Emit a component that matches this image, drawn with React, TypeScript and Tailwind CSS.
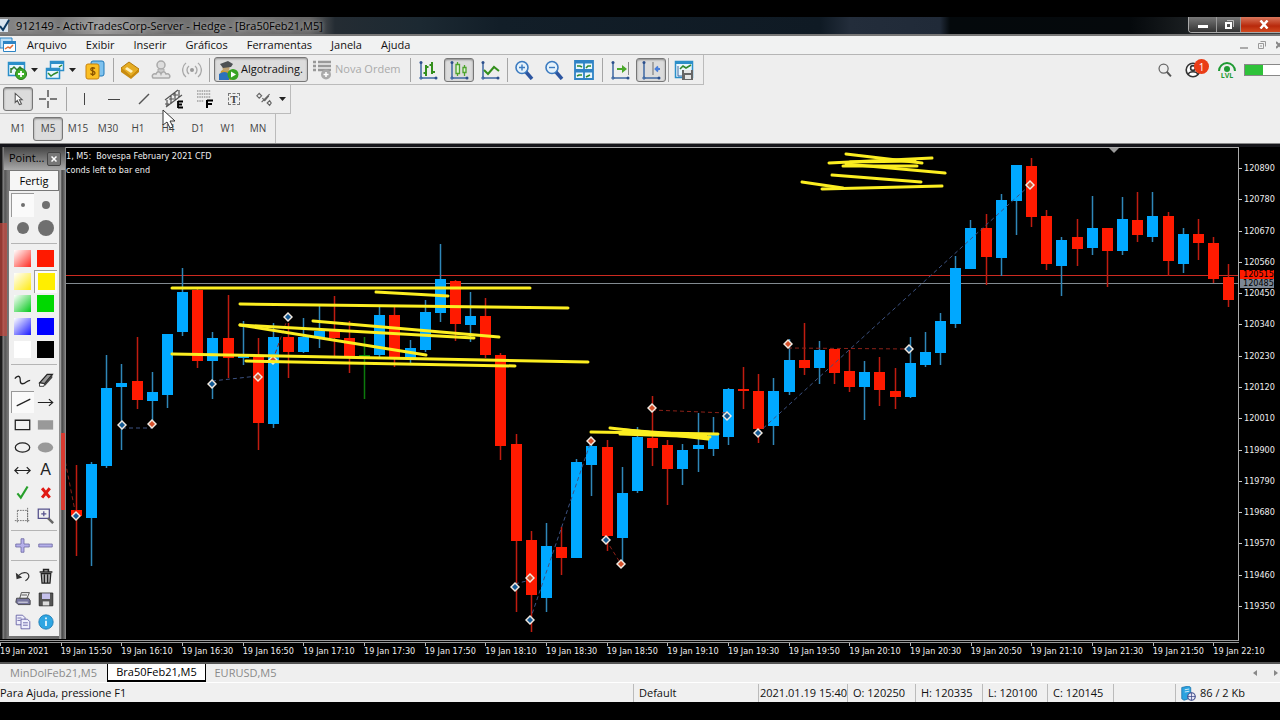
import { ReactNode } from 'react';
import clsx from 'clsx';

type Candle = [kind: 'u' | 'd' | 'n', high: number, top: number, bottom: number, low: number];
type Line = [x1: number, y1: number, x2: number, y2: number];

const FIRST_X = 76;
const STEP = 15.16;

const COLORS = { u: '#00a8ff', d: '#ff1a00', n: '#0c8a0c' };
const WICKS = { u: '#2f87b8', d: '#c01c10', n: '#0c7a0c' };

const CANDLES: Candle[] = [
	['d', 465, 510, 516, 556],
	['u', 462, 464, 518, 566],
	['u', 355, 388, 466, 468],
	['u', 364, 383, 387, 450],
	['d', 337, 381, 400, 409],
	['u', 372, 392, 401, 423],
	['u', 334, 334, 395, 408],
	['u', 268, 292, 332, 336],
	['d', 289, 290, 361, 368],
	['u', 332, 338, 361, 399],
	['d', 295, 338, 358, 378],
	['u', 321, 355, 358, 365],
	['d', 338, 357, 423, 450],
	['u', 323, 337, 424, 428],
	['d', 323, 337, 352, 378],
	['u', 318, 337, 352, 353],
	['u', 306, 331, 338, 348],
	['d', 296, 331, 338, 357],
	['d', 321, 338, 357, 373],
	['n', 337, 355, 357, 399],
	['u', 307, 315, 355, 357],
	['d', 307, 315, 357, 367],
	['u', 340, 348, 358, 363],
	['u', 300, 312, 350, 352],
	['u', 244, 279, 313, 322],
	['d', 280, 281, 324, 341],
	['u', 292, 316, 325, 342],
	['d', 298, 316, 355, 358],
	['d', 353, 355, 446, 460],
	['d', 434, 444, 541, 612],
	['d', 531, 540, 595, 632],
	['u', 523, 546, 598, 612],
	['d', 527, 547, 558, 575],
	['u', 459, 462, 558, 558],
	['u', 437, 446, 465, 496],
	['d', 440, 447, 536, 551],
	['u', 467, 493, 538, 567],
	['u', 427, 437, 491, 493],
	['d', 396, 438, 448, 466],
	['d', 440, 445, 469, 505],
	['u', 444, 450, 469, 485],
	['u', 413, 445, 449, 472],
	['u', 417, 435, 449, 456],
	['u', 388, 389, 437, 445],
	['d', 367, 389, 391, 409],
	['d', 374, 391, 429, 443],
	['u', 378, 391, 426, 445],
	['u', 339, 360, 392, 395],
	['d', 323, 360, 368, 375],
	['u', 341, 350, 368, 384],
	['d', 349, 349, 373, 384],
	['d', 350, 371, 387, 392],
	['u', 361, 372, 387, 420],
	['d', 357, 372, 390, 406],
	['d', 368, 391, 397, 409],
	['u', 337, 363, 397, 398],
	['u', 332, 352, 365, 367],
	['u', 313, 321, 353, 365],
	['u', 256, 268, 324, 328],
	['u', 220, 228, 269, 269],
	['d', 214, 228, 257, 285],
	['u', 194, 200, 258, 276],
	['u', 165, 165, 201, 235],
	['d', 158, 166, 217, 227],
	['d', 210, 216, 264, 270],
	['u', 237, 240, 266, 296],
	['d', 219, 237, 249, 266],
	['u', 196, 228, 248, 255],
	['d', 228, 228, 251, 287],
	['u', 197, 219, 251, 255],
	['d', 192, 220, 235, 242],
	['u', 192, 216, 237, 242],
	['d', 212, 216, 261, 276],
	['u', 228, 234, 264, 273],
	['d', 219, 234, 243, 260],
	['d', 237, 243, 279, 283],
	['d', 264, 277, 300, 307],
];

const BUYS = [[76, 516], [122, 425], [212, 384], [288, 317], [515, 587], [530, 620], [606, 540], [727, 416], [758, 433], [909, 349]];
const SELLS = [[152, 424], [258, 377], [273, 360], [530, 578], [591, 441], [621, 564], [652, 408], [788, 344], [1030, 185]];

const BLUE_TRADES: Line[] = [
	[122, 428, 152, 428],
	[212, 381, 258, 376],
	[515, 584, 530, 580],
	[530, 620, 591, 441],
	[758, 433, 1030, 185],
];
const RED_TRADES: Line[] = [
	[64, 455, 76, 516],
	[273, 360, 288, 317],
	[606, 540, 621, 564],
	[652, 410, 727, 413],
	[788, 348, 909, 349],
];

const STROKES: Line[] = [
	[172, 288, 530, 288],
	[376, 292, 448, 296],
	[240, 304, 568, 308],
	[240, 325, 474, 338],
	[240, 325, 426, 355],
	[313, 321, 499, 337],
	[172, 354, 588, 362],
	[246, 361, 515, 366],
	[591, 432, 718, 434],
	[610, 428, 708, 439],
	[620, 434, 710, 437],
	[624, 430, 706, 436],
	[846, 154, 922, 163],
	[829, 163, 932, 158],
	[843, 166, 917, 166],
	[846, 164, 945, 173],
	[850, 162, 915, 161],
	[832, 175, 921, 182],
	[802, 182, 843, 188],
	[822, 189, 942, 186],
];

const PRICES = [120890, 120780, 120670, 120560, 120450, 120340, 120230, 120120, 120010, 119900, 119790, 119680, 119570, 119460, 119350];
const TIMES = ['2021', '15:50', '16:10', '16:30', '16:50', '17:10', '17:30', '17:50', '18:10', '18:30', '18:50', '19:10', '19:30', '19:50', '20:10', '20:30', '20:50', '21:10', '21:30', '21:50', '22:10'];
const MENUS = ['Arquivo', 'Exibir', 'Inserir', 'Gráficos', 'Ferramentas', 'Janela', 'Ajuda'];
const PERIODS = ['M1', 'M5', 'M15', 'M30', 'H1', 'H4', 'D1', 'W1', 'MN'];

function Icon({ children, size = 20 }: { children: ReactNode; size?: number }) {
	return (
		<svg width={size} height={size} viewBox="0 0 20 20" fill="none" className="shrink-0" aria-hidden>
			{children}
		</svg>
	);
}

function Caret() {
	return (
		<svg width="7" height="4" viewBox="0 0 7 4" className="shrink-0" aria-hidden>
			<path d="M0 0h7L3.5 4z" fill="#222" />
		</svg>
	);
}

function Sep() {
	return <div className="h-6 w-px shrink-0 bg-[#a5a5a5]" />;
}

interface IToolProps {
	label: string;
	active?: boolean;
	children: ReactNode;
}

function Tool({ label, active, children }: IToolProps) {
	return (
		<button
			aria-label={label}
			className={clsx(
				'flex h-6 w-[30px] shrink-0 items-center justify-center rounded-[3px]',
				active && 'border border-[#777] bg-[#dcdcdc] shadow-[inset_0_1px_2px_#888]'
			)}
		>
			{children}
		</button>
	);
}

function Axes() {
	return (
		<>
			<path d="M3 2v16h15" stroke="#3f68a3" strokeWidth="1.5" />
			<path d="M1 18h4M3 16v4" stroke="#3f68a3" />
			<circle cx="3" cy="2.5" r="1.5" fill="#2c4f8c" />
			<circle cx="18" cy="18" r="1.5" fill="#2c4f8c" />
		</>
	);
}

function TitleBar() {
	return (
		<header className="flex h-[19px] items-stretch justify-between border-b-2 border-[#777] bg-[linear-gradient(90deg,#858585_0,#777_60px,#999_100px,#7d7d7d_145px,#6e6e6e_170px,#777_240px,#666_310px,#242c33_335px,#1c2932_420px,#121e28_500px,#0f1a24_820px,#232d3b_850px,#202a38_940px,#04090c_950px,#05090c_1130px,#3c4042_100%)]">
			<div className="flex items-center">
				<svg width="10" height="15" viewBox="0 0 10 15" aria-hidden>
					<path d="M0 1h8v13H0z" fill="#d8e4ef" />
					<path d="M0 8l3 4 6-10" fill="none" stroke="#0d3a63" strokeWidth="2" />
				</svg>
				<h1 className="ml-1.5 text-[11px] leading-4 text-black [text-shadow:0_0_4px_#ccc]">
					912149 - ActivTradesCorp-Server - Hedge - [Bra50Feb21,M5]
				</h1>
			</div>
			<div className="mb-px flex overflow-hidden rounded-bl border-b border-l border-[#aaa]">
				<button aria-label="Minimizar" className="flex w-7 items-center justify-center border-r border-[#999] bg-[linear-gradient(#777,#333)]">
					<span className="mt-1 h-[3px] w-2.5 bg-white" />
				</button>
				<button aria-label="Restaurar" className="flex w-6 items-center justify-center border-r border-[#999] bg-[linear-gradient(#777,#333)]">
					<svg width="10" height="10" viewBox="0 0 10 10" fill="none" stroke="#fff" aria-hidden>
						<path d="M3 0.5h6.5V7" stroke="#bbb" />
						<path d="M2 3h5v5H2z" strokeWidth="2" />
					</svg>
				</button>
				<button aria-label="Fechar" className="flex w-[39px] items-center justify-center bg-[linear-gradient(#d9775c,#b8290b_60%,#d0491f)] pl-1.5">
					<svg width="10" height="9" viewBox="0 0 10 9" aria-hidden>
						<path d="M1.5 0.5l7 8M8.5 0.5l-7 8" stroke="#fff" strokeWidth="2.5" />
					</svg>
				</button>
			</div>
		</header>
	);
}

function MenuBar() {
	return (
		<nav className="flex h-[19px] items-center justify-between border-b border-[#b5b5b5] bg-[#f1f2f2] text-[11px]">
			<div className="flex items-center">
				<svg width="16" height="16" viewBox="0 0 16 16" aria-hidden>
					<path d="M0 1h12v10H0z" fill="#bfe0f7" stroke="#2d84c4" />
					<path d="M3.5 4.5h12v10h-12z" fill="#fff" stroke="#2d84c4" />
					<path d="M3 4h13v3H3z" fill="#2d84c4" />
					<path d="M5 12l3-2 2 1 3-3" fill="none" stroke="#e06b34" strokeWidth="1.5" />
				</svg>
				<div className="ml-[11px] flex gap-[19px]">
					{MENUS.map((menu) => (
						<button key={menu}>{menu}</button>
					))}
				</div>
			</div>
			<div className="flex items-center gap-2.5">
				<button aria-label="Minimizar gráfico" className="mt-1.5 h-0.5 w-2 bg-[#aaa]" />
				<button aria-label="Restaurar gráfico">
					<svg width="8" height="8" viewBox="0 0 8 8" fill="none" stroke="#999" aria-hidden>
						<path d="M2.5 0.5h5v5M0.5 2.5h5v5h-5zM2 5h2" />
					</svg>
				</button>
				<button aria-label="Fechar gráfico">
					<svg width="4" height="8" viewBox="0 0 4 8" fill="none" stroke="#888" aria-hidden>
						<path d="M0 1l6 6M6 1L0 7" strokeWidth="2" />
					</svg>
				</button>
			</div>
		</nav>
	);
}

function MainToolbar() {
	return (
		<div className="flex h-[30px] items-center justify-between">
			<div className="flex h-full items-center border-r border-b border-[#bbb] pr-1 pl-0.5">
				<button aria-label="Novo gráfico" className="flex w-[38px] items-center gap-1 pl-[5px]">
					<Icon>
						<path d="M1.5 2.5h16v13h-16z" fill="#eaf6fd" stroke="#2b8fc9" strokeWidth="1.5" />
						<path d="M1 2h17v3H1z" fill="#2b8fc9" />
						<path d="M4 13V8M4 10l3-3 3 3 3-3 2 2" stroke="#2f7d2f" strokeWidth="1.5" />
						<circle cx="14" cy="14" r="5.5" fill="#3fae29" stroke="#287a1b" />
						<path d="M14 11v6M11 14h6" stroke="#fff" strokeWidth="1.8" />
					</Icon>
					<Caret />
				</button>
				<button aria-label="Perfis" className="flex w-[38px] items-center gap-1 pl-[5px]">
					<Icon>
						<path d="M5.5 1.5h13v9h-13z" fill="#eaf6fd" stroke="#2b8fc9" strokeWidth="1.5" />
						<path d="M5 1h14v3H5z" fill="#2b8fc9" />
						<path d="M1.5 8.5h13v10h-13z" fill="#eaf6fd" stroke="#2b8fc9" strokeWidth="1.5" />
						<path d="M1 8h14v3H1z" fill="#2b8fc9" />
						<path d="M3 13l3 3 3-2 4-2M14 7l3-2" stroke="#2f8a2f" strokeWidth="1.5" />
					</Icon>
					<Caret />
				</button>
				<div className="mr-[3px] ml-0.5">
					<Tool label="Símbolos">
						<Icon>
							<rect x="6" y="1" width="13" height="15" rx="2" fill="#7fc2ee" stroke="#1f78b8" />
							<rect x="1" y="4" width="13" height="15" rx="2" fill="#fbbf24" stroke="#c9820c" />
							<path d="M10 8.5c-2-1.5-5-.5-4 1.5.7 1.5 4 1 4 3s-3 2-4.5.5M7.7 7v9" stroke="#8a5200" strokeWidth="1.3" />
						</Icon>
					</Tool>
				</div>
				<Sep />
				<div className="mr-0.5 ml-px flex gap-px">
					<Tool label="MetaEditor">
						<Icon>
							<path d="M1 8l8-6 10 7-8 8z" fill="#e5ac23" stroke="#b37a0c" />
							<path d="M1 8v4l10 7v-3zM11 19l8-7V9l-8 7z" fill="#c98c10" />
							<path d="M7 7l6 4-2 2-6-4z" fill="#fff1bd" />
						</Icon>
					</Tool>
					<Tool label="Nuvem">
						<Icon>
							<circle cx="10" cy="5" r="4" fill="#ddd" stroke="#aaa" strokeWidth="1.5" />
							<path d="M7 9h6v5H7z" fill="#ccc" stroke="#aaa" />
							<path d="M2 18c-2-3 1-5 3-4 1-3 4-3 5 0 1-3 4-3 5 0 3-1 5 2 3 4z" fill="#e4e4e4" stroke="#aaa" strokeWidth="1.5" />
						</Icon>
					</Tool>
					<Tool label="Sinais">
						<Icon>
							<circle cx="10" cy="10" r="2" fill="#999" />
							<path d="M7 6a5 5 0 000 8M13 6a5 5 0 010 8M4 3a9 9 0 000 14M16 3a9 9 0 010 14" stroke="#aaa" strokeWidth="1.4" />
						</Icon>
					</Tool>
				</div>
				<Sep />
				<button className="ml-1 flex h-[25px] w-[94px] items-center rounded-[3px] border border-[#777] bg-[#dcdcdc] pl-1 text-[11px] shadow-[inset_0_1px_2px_#999]">
					<Icon>
						<path d="M2 11l5-3 4 4 1 8H0z" fill="#d39c29" />
						<circle cx="7" cy="8" r="3.5" fill="#bda273" />
						<path d="M1 4l8-3 5 3-2 3-8 1z" fill="#4d5154" />
						<path d="M0 14q6-4 10 0v6H0z" fill="#2d71bd" />
						<circle cx="14" cy="14.5" r="5.5" fill="#38a322" />
						<path d="M12 11.5l5 3-5 3z" fill="#fff" />
					</Icon>
					<span className="ml-0.5 whitespace-nowrap">Algotrading.</span>
				</button>
				<button className="mx-1 flex w-[94px] items-center gap-[3px] text-[11px] whitespace-nowrap text-[#aaa]">
					<Icon>
						<path d="M1 2h3M1 6h3M1 10h3M6 2h13M6 6h13M6 10h13" stroke="#999" strokeWidth="2.5" />
						<circle cx="14" cy="14.5" r="5" fill="#aaa" />
						<path d="M14 12v5M11.5 14.5h5" stroke="#fff" strokeWidth="1.5" />
					</Icon>
					<span>Nova Ordem</span>
				</button>
				<Sep />
				<div className="mx-0.5 flex gap-px">
					<Tool label="Barras">
						<Icon>
							<Axes />
							<path d="M8 5v11M5.5 13H8M8 7h2.5M14 2v12M11.5 5H14M14 12h3" stroke="#338f1c" strokeWidth="2" />
						</Icon>
					</Tool>
					<Tool label="Velas" active>
						<Icon>
							<Axes />
							<path d="M8.5 2v14M15.5 5v11" stroke="#4da32d" strokeWidth="1.3" />
							<path d="M7 4.5h3.5v9H7zM14 7.5h3v5h-3z" fill="#dff2d4" stroke="#4da32d" strokeWidth="1.3" />
						</Icon>
					</Tool>
					<Tool label="Linha">
						<Icon>
							<Axes />
							<path d="M4 10l4 4 6-7 5 4" stroke="#338f1c" strokeWidth="2" />
						</Icon>
					</Tool>
				</div>
				<Sep />
				<div className="mr-[3px] ml-px flex">
					<Tool label="Ampliar">
						<Icon>
							<path d="M12 12l6 7" stroke="#2c55a0" strokeWidth="3.5" />
							<circle cx="8" cy="7.5" r="6" fill="#e5f2fb" stroke="#3c7bc0" strokeWidth="1.6" />
							<path d="M8 4.5v6M5 7.5h6" stroke="#3c7bc0" strokeWidth="1.4" />
						</Icon>
					</Tool>
					<Tool label="Reduzir">
						<Icon>
							<path d="M12 12l6 7" stroke="#2c55a0" strokeWidth="3.5" />
							<circle cx="8" cy="7.5" r="6" fill="#e5f2fb" stroke="#3c7bc0" strokeWidth="1.6" />
							<path d="M5 7.5h6" stroke="#3c7bc0" strokeWidth="1.4" />
						</Icon>
					</Tool>
					<Tool label="Organizar janelas">
						<Icon>
							<path d="M1 1h18v18H1z" fill="#e9f6fc" />
							<path d="M1 1h18v18H1zM10 1v18M1 10h18M1 2.5h18M1 11.5h18" stroke="#2f83c5" strokeWidth="1.8" />
							<path d="M3 6h3l2 1M12 8l2-2h3M3 16l2-1h3M12 17l4-2" stroke="#2f8a2f" strokeWidth="1.6" />
						</Icon>
					</Tool>
				</div>
				<Sep />
				<div className="mx-0.5 flex gap-px">
					<Tool label="Rolagem automática">
						<Icon>
							<Axes />
							<path d="M18.5 2v13" stroke="#888" />
							<path d="M7 8h5V5l5 4-5 4v-3H7z" fill="#4aa82a" />
						</Icon>
					</Tool>
					<Tool label="Deslocar gráfico" active>
						<Icon>
							<Axes />
							<path d="M12 2v13" stroke="#888" strokeWidth="1.3" />
							<path d="M19 9h-4M17 6.5L14.5 9l2.5 2.5" stroke="#4a7fdb" strokeWidth="1.8" />
						</Icon>
					</Tool>
				</div>
				<Sep />
				<Tool label="Modelos">
					<Icon>
						<path d="M1.5 1.5h17v16h-17z" fill="#e9f6fc" stroke="#2b8fc9" strokeWidth="1.5" />
						<path d="M1 1h18v3H1z" fill="#2b8fc9" />
						<path d="M4 6v10h5" stroke="#3f68a3" />
						<path d="M6 9l3-3 3 2 5-3" stroke="#2f8a2f" strokeWidth="1.6" />
						<path d="M8 10h11v10H8z" fill="#666" />
						<path d="M10 10h7v3h-7zM11 15h6v4h-6z" fill="#e5e5e5" />
					</Icon>
				</Tool>
			</div>
			<div className="flex items-center">
				<button aria-label="Pesquisar" className="mr-[13px]">
					<Icon size={14}>
						<circle cx="8" cy="8" r="6.5" stroke="#666" strokeWidth="1.8" />
						<path d="M12.5 12.5l6 6.5" stroke="#555" strokeWidth="2.8" />
					</Icon>
				</button>
				<button aria-label="Conta" className="relative mr-[9px] w-6">
					<Icon size={16}>
						<circle cx="10" cy="10" r="8.5" fill="#fff" stroke="#333" strokeWidth="2" />
						<circle cx="10" cy="7.5" r="3" stroke="#333" strokeWidth="2" />
						<path d="M4 16c1-5 11-5 12 0" stroke="#333" strokeWidth="2" />
					</Icon>
					<span className="absolute -top-[3px] right-0 flex size-[15px] items-center justify-center rounded-full bg-[#ea3d17] text-[10px] leading-none text-white">1</span>
				</button>
				<button aria-label="Nível" className="mr-2 flex w-[18px] flex-col items-center">
					<svg width="18" height="10" viewBox="0 0 18 10" fill="none" aria-hidden>
						<path d="M1 9a8 8 0 0116 0" stroke="#1f9b33" strokeWidth="2" />
						<circle cx="9" cy="7" r="3" fill="#1f9b33" />
					</svg>
					<span className="text-[7px] leading-[7px] font-bold text-[#1f9b33]">LVL</span>
				</button>
				<div className="h-3 w-9 border border-r-0 border-[#888] bg-white">
					<div className="h-full w-1/2 bg-[#2fc23a]" />
				</div>
			</div>
		</div>
	);
}

function DrawingToolbar() {
	return (
		<div className="flex h-[29px] w-fit items-center border-r border-b border-[#bbb] pr-px pl-[3px]">
			<Tool label="Cursor" active>
				<Icon size={14}>
					<path d="M6 2v13l3-3 3 6 3-1-3-6h4z" fill="#fff" stroke="#555" strokeWidth="1.5" />
				</Icon>
			</Tool>
			<Tool label="Mira">
				<Icon>
					<path d="M10 1v7M10 12v7M1 10h7M12 10h7" stroke="#555" strokeWidth="1.5" />
				</Icon>
			</Tool>
			<div className="mr-0.5 ml-[3px]">
				<Sep />
			</div>
			<Tool label="Linha vertical">
				<div className="h-3 w-px bg-[#444]" />
			</Tool>
			<Tool label="Linha horizontal">
				<div className="h-px w-3 bg-[#444]" />
			</Tool>
			<Tool label="Linha de tendência">
				<Icon>
					<path d="M5 15L15 5" stroke="#555" strokeWidth="1.4" />
				</Icon>
			</Tool>
			<Tool label="Canal equidistante">
				<Icon>
					<path d="M1 11L14 1M2 18L18 6M3 11v6M7 6v9M11 3v9M15 1v8M1 15h4M5 10h5M9 6h5" stroke="#555" strokeWidth="1.2" />
					<path d="M14 12v7M14 12.5h5M14 15.5h4M14 18.5h5" stroke="#000" strokeWidth="1.8" />
				</Icon>
			</Tool>
			<Tool label="Fibonacci">
				<Icon>
					<path d="M3 2h14M3 5h14M3 8h14M3 12h7" stroke="#777" strokeDasharray="1.5 0.8" />
					<path d="M13 19v-8M13 11.5h6M13 15h5" stroke="#000" strokeWidth="2" />
				</Icon>
			</Tool>
			<Tool label="Texto">
				<div className="flex size-3 items-center justify-center border border-dashed border-[#777] font-['Liberation_Serif',serif] text-[11px] leading-none font-bold text-[#444]">T</div>
			</Tool>
			<button aria-label="Objetos" className="flex w-10 items-center justify-between pr-[3px] pl-[7px]">
				<Icon size={16}>
					<path d="M1 6l3-3 3 3-3 3zM7 14L17 4M8 9l3 3 5-6" stroke="#666" strokeWidth="1.5" />
					<path d="M14 15l3-3 2 3-2 3z" stroke="#666" strokeWidth="1.5" />
				</Icon>
				<Caret />
			</button>
		</div>
	);
}

function PeriodToolbar() {
	return (
		<div className="flex h-[29px] w-fit items-center border-r border-[#bbb] pr-0.5 pl-[3px] text-[10px] text-[#444]">
			{PERIODS.map((period) => (
				<Tool key={period} label={period} active={period === 'M5'}>
					{period}
				</Tool>
			))}
		</div>
	);
}

function Marker({ x, y, color }: { x: number; y: number; color: string }) {
	return (
		<g>
			<path d={`M${x} ${y - 5}l5 5-5 5-5-5z`} fill="#f2e9e0" />
			<path d={`M${x} ${y - 3}l3 3-3 3-3-3z`} fill={color} />
		</g>
	);
}

function Dashes({ lines, color }: { lines: Line[]; color: string }) {
	return (
		<g stroke={color} strokeDasharray="4 3">
			{lines.map(([x1, y1, x2, y2]) => (
				<line key={`${x1}-${y1}`} x1={x1} y1={y1} x2={x2} y2={y2} />
			))}
		</g>
	);
}

function Plot() {
	return (
		<svg viewBox="0 148 1238 492" preserveAspectRatio="none" className="absolute inset-0 h-full w-full" aria-label="Bra50Feb21 M5">
			<path d="M1109 148h10l-5 5z" fill="#9a9a9a" />
			<rect y="275" width="1238" height="1" fill="#cc2a20" />
			<rect y="283" width="1238" height="1" fill="#828a90" />
			{CANDLES.map(([kind, high, top, bottom, low], i) => {
				const x = Math.round(FIRST_X + i * STEP);
				return (
					<g key={i}>
						<path d={`M${x + 0.5} ${high}V${low}`} stroke={WICKS[kind]} strokeWidth="1.5" />
						<rect x={x - 5} y={top} width="11" height={bottom - top} fill={COLORS[kind]} />
					</g>
				);
			})}
			<Dashes lines={BLUE_TRADES} color="#3c5282" />
			<Dashes lines={RED_TRADES} color="#8c2118" />
			{BUYS.map(([x, y]) => (
				<Marker key={x} x={x} y={y} color="#145a94" />
			))}
			{SELLS.map(([x, y]) => (
				<Marker key={x} x={x} y={y} color="#d4502a" />
			))}
			<g stroke="#fcee21" strokeWidth="3" strokeLinecap="round">
				{STROKES.map(([x1, y1, x2, y2], i) => (
					<line key={i} x1={x1} y1={y1} x2={x2} y2={y2} />
				))}
			</g>
		</svg>
	);
}

function PaletteCell({ label, active, children }: IToolProps) {
	return (
		<button
			aria-label={label}
			className={clsx('flex items-center justify-center', active && 'border-t border-l border-[#999] bg-[#fafafa]')}
		>
			{children}
		</button>
	);
}

const SWATCHES = [
	['Vermelho claro', 'bg-[linear-gradient(135deg,#fff,#ff2a20)]'],
	['Vermelho', 'bg-[#ff1a00]'],
	['Amarelo claro', 'bg-[linear-gradient(135deg,#fff,#ffea10)]'],
	['Amarelo', 'bg-[#ffee00]'],
	['Verde claro', 'bg-[linear-gradient(135deg,#fff,#00c818)]'],
	['Verde', 'bg-[#00d800]'],
	['Azul claro', 'bg-[linear-gradient(135deg,#fff,#1818ff)]'],
	['Azul', 'bg-[#0000ff]'],
	['Branco', 'bg-white'],
	['Preto', 'bg-black'],
];

const DOTS = ['size-1', 'size-2', 'size-3', 'size-4'];

const SHAPES: [string, ReactNode][] = [
	['Mão livre', <path d="M1 9c2-3 5-4 6-1s-1 7 3 7c4 0 5-4 9-4" stroke="#222" strokeWidth="1.5" />],
	['Borracha', <><path d="M3 14l9-10h6l-9 11z" fill="#999" stroke="#222" strokeWidth="1.5" /><path d="M3 14l6 1-1 3H3z" fill="#fff" stroke="#222" /><path d="M9 15l9-11v4l-9 10z" fill="#444" /></>],
	['Linha', <path d="M2 14L18 6" stroke="#222" strokeWidth="1.4" />],
	['Seta', <path d="M1 10h17M14 6l4.5 4-4.5 4" stroke="#222" strokeWidth="1.4" />],
	['Retângulo', <path d="M1.5 5h17v11h-17z" stroke="#222" strokeWidth="1.5" />],
	['Retângulo cheio', <path d="M1 5h18v11H1z" fill="#999" />],
	['Elipse', <ellipse cx="10" cy="10" rx="8.5" ry="5.5" stroke="#222" strokeWidth="1.5" />],
	['Elipse cheia', <ellipse cx="10" cy="10" rx="9" ry="6" fill="#999" />],
	['Seta dupla', <path d="M1.5 10h17M5 6l-4 4 4 4M15 6l4 4-4 4" stroke="#222" strokeWidth="1.4" />],
	['Texto', null],
	['Certo', <path d="M4 11l4 5 8-13" stroke="#28a02c" strokeWidth="2.5" />],
	['Errado', <path d="M6 5l9 11M15 5L6 16" stroke="#e01a14" strokeWidth="3.5" />],
	['Recortar', <path d="M4 4h12v13M4 4v14M1 16h18M16 1v18" stroke="#666" strokeDasharray="2 1" />],
	['Zoom', <><path d="M1.5 2.5h13v11h-13zM8 5v6M5 8h6" stroke="#55518c" strokeWidth="1.5" /><path d="M13 13l6 6" stroke="#666" strokeWidth="3" /></>],
];

const FILES: [string, ReactNode][] = [
	['Desfazer', <><path d="M5 9c6-6 14-3 12 3-1 2-2 3-4 4" stroke="#333" strokeWidth="1.5" /><path d="M1 6l1 8 7-2z" fill="#333" /></>],
	['Lixeira', <><path d="M2 5h16M7 4V2h6v2" stroke="#222" strokeWidth="2" /><path d="M4 7h12l-1 12H5zM8 8v10M12 8v10" fill="#aaa" stroke="#222" strokeWidth="1.5" /></>],
	['Imprimir', <><path d="M2 9h15l2 3v5H4l-3-3z" fill="#77769f" stroke="#333" /><path d="M6 9l2-7h10l-3 7zM8 5h7" fill="#f2f2f2" stroke="#333" /><path d="M4 14h12" stroke="#fff" /></>],
	['Salvar', <><path d="M1.5 2.5h17v16h-17z" fill="#555" stroke="#222" /><path d="M5 3h10v7H5z" fill="#c5c1ec" /><path d="M6 13h8v5H6z" fill="#ddd" /></>],
	['Copiar', <><path d="M1.5 1.5h8l3 3v9h-11z" fill="#eeeefb" stroke="#55519c" /><path d="M7.5 6.5h8l3 3v9h-11z" fill="#eeeefb" stroke="#55519c" /><path d="M3 5h5M3 8h4M10 11h6M10 14h6" stroke="#55519c" /></>],
	['Informações', <><circle cx="10" cy="10" r="9" fill="#2fa6e2" stroke="#1876b0" /><path d="M10 8.5V15M10 4.5v2" stroke="#fff" strokeWidth="2" /></>],
];

function PaletteRule() {
	return <hr className="mx-0.5 my-[3px] border-[#b5b5b5]" />;
}

function Palette() {
	return (
		<aside className="absolute top-0 left-0 h-[492px] w-[66px] border-r border-[#888] bg-[linear-gradient(90deg,#1a1a1a_0,#1a1a1a_2px,#888_3px,#555_5px,#777_8px,#666_59px,#bbb_60px,#444_62px,#777_65px)]">
			<div className="absolute top-[76px] left-0 h-[113px] w-[7px] bg-[#c9483f]/70" />
			<div className="absolute top-[286px] right-0 h-[77px] w-1 bg-[#d83a30]" />
			<div className="ml-1 flex h-[23px] items-center justify-between bg-[linear-gradient(#444,#aaa)] pr-1 pl-[5px] text-[11px]">
				<span>Point...</span>
				<button aria-label="Fechar paleta" className="flex size-[14px] items-center justify-center rounded-[2px] border border-[#444] bg-[#777]">
					<svg width="6" height="6" viewBox="0 0 6 6" aria-hidden>
						<path d="M0.5 0.5l5 5M5.5 0.5l-5 5" stroke="#fff" strokeWidth="1.5" />
					</svg>
				</button>
			</div>
			<div className="mr-1.5 ml-[9px] h-[466px] bg-[#f0f0f0]">
				<button className="mb-0.5 h-[21px] w-full border border-[#777] bg-[#f6f6f6] text-[11px] leading-4">Fertig</button>
				<div className="grid h-[47px] grid-cols-2 grid-rows-2 px-[2px]">
					{DOTS.map((size, i) => (
						<PaletteCell key={size} label={`Espessura ${i + 1}`} active={i === 0}>
							<span className={clsx('rounded-full bg-[#6f6f6f]', size)} />
						</PaletteCell>
					))}
				</div>
				<PaletteRule />
				<div className="grid h-[114px] grid-cols-2 grid-rows-5 px-[2px]">
					{SWATCHES.map(([name, color], i) => (
						<PaletteCell key={name} label={name} active={i === 3}>
							<span className={clsx('size-[17px]', color)} />
						</PaletteCell>
					))}
				</div>
				<PaletteRule />
				<div className="grid h-[159px] grid-cols-2 grid-rows-7 px-[2px]">
					{SHAPES.map(([name, shape], i) => (
						<PaletteCell key={name} label={name} active={i === 2}>
							{shape ? <Icon size={17}>{shape}</Icon> : <span className="font-['Liberation_Sans',sans-serif] text-[16px] leading-none text-[#222]">A</span>}
						</PaletteCell>
					))}
				</div>
				<PaletteRule />
				<div className="grid h-[23px] grid-cols-2 px-[2px]">
					<PaletteCell label="Aumentar">
						<Icon size={15}>
							<path d="M8 1h4v7h7v4h-7v7H8v-7H1V8h7z" fill="#b5b0ea" stroke="#66629c" />
						</Icon>
					</PaletteCell>
					<PaletteCell label="Diminuir">
						<Icon size={15}>
							<path d="M1 8h18v4H1z" fill="#b5b0ea" stroke="#66629c" />
						</Icon>
					</PaletteCell>
				</div>
				<PaletteRule />
				<div className="grid h-[69px] grid-cols-2 grid-rows-3 px-[2px]">
					{FILES.map(([name, shape]) => (
						<PaletteCell key={name} label={name}>
							<Icon size={16}>{shape}</Icon>
						</PaletteCell>
					))}
				</div>
			</div>
		</aside>
	);
}

function Chart() {
	return (
		<main className="relative flex flex-1 flex-col border-t-3 border-[#15151a] bg-black font-['DejaVu_Sans_Condensed','DejaVu_Sans',sans-serif] text-[9px] text-[#eee]">
			<div className="flex flex-1">
				<div className="relative flex-1 border-t border-r border-[#aaa]">
					<Plot />
					<div className="absolute top-px left-[66px] leading-[14px] whitespace-pre">
						<p>1, M5:  Bovespa February 2021 CFD</p>
						<p>conds left to bar end</p>
					</div>
				</div>
				<div className="relative flex w-[41px] flex-col pt-1.5 pb-[18px] leading-[9px]">
					{PRICES.map((price) => (
						<div key={price} className="flex flex-1 items-center gap-0.5">
							<span className="h-px w-[3px] bg-[#ccc]" />
							{price}
						</div>
					))}
					<div className="absolute top-[123px] left-px w-[34px] text-black">
						<p className="bg-[#ff1a00] pl-[3px]">120515</p>
						<p className="bg-[#7c8795] pl-[3px]">120485</p>
					</div>
				</div>
			</div>
			<div className="mr-[41px] h-[3px] border-y border-[#999]" />
			<div className="mr-1.5 grid h-[19px] grid-cols-21">
				{TIMES.map((time) => (
					<div key={time} className="relative pt-0.5 leading-3 whitespace-nowrap">
						<span className="absolute top-0 left-0 h-[3px] w-px bg-[#bbb]" />
						19 Jan {time}
					</div>
				))}
			</div>
			<div className="font-['Open_Sans','Noto_Sans',sans-serif] text-black">
				<Palette />
			</div>
		</main>
	);
}

function ChartTabs() {
	return (
		<div className="flex h-5 items-start justify-between border-t-2 border-[#555] bg-[#efefef] text-[11px] leading-4 text-[#8a8a8a]">
			<div className="flex">
				<button className="w-[107px]">MinDolFeb21,M5</button>
				<button className="h-[18px] w-[99px] border-x border-b-2 border-black bg-white text-black">Bra50Feb21,M5</button>
				<button className="w-[79px]">EURUSD,M5</button>
			</div>
			<div className="flex h-full items-center gap-[17px] pr-0.5">
				<button aria-label="Abas anteriores">
					<svg width="4" height="6" viewBox="0 0 4 6" aria-hidden><path d="M4 0v6L0 3z" fill="#888" /></svg>
				</button>
				<button aria-label="Próximas abas">
					<svg width="4" height="6" viewBox="0 0 4 6" aria-hidden><path d="M0 0v6l4-3z" fill="#888" /></svg>
				</button>
			</div>
		</div>
	);
}

function StatusBar() {
	const cell = 'flex h-[18px] shrink-0 items-center border-l border-[#bbb] pl-[5px]';

	return (
		<footer className="flex h-5 items-end border-t border-white bg-[#f0f0f0] text-[11px] whitespace-nowrap">
			<p className="flex h-[18px] flex-1 items-center">Para Ajuda, pressione F1</p>
			<p className={clsx(cell, 'w-[125px]')}>Default</p>
			<p className="flex h-[18px] w-[89px] shrink-0 items-center border-l border-[#bbb] pl-px">2021.01.19 15:40</p>
			<p className={clsx(cell, 'w-[68px]')}>O: 120250</p>
			<p className={clsx(cell, 'w-[67px]')}>H: 120335</p>
			<p className={clsx(cell, 'w-[65px]')}>L: 120100</p>
			<p className={clsx(cell, 'w-[66px]')}>C: 120145</p>
			<p className={clsx(cell, 'w-[62px]')} />
			<p className={clsx(cell, 'w-[105px] gap-1')}>
				<Icon size={15}>
					<path d="M1 2l9-2 3 2v14l-9 3-3-2z" fill="#2ba3e0" stroke="#176ea8" />
					<path d="M5 5l6-1M5 8l6-1" stroke="#fff" />
					<circle cx="14" cy="14" r="5" fill="#e5e5f5" stroke="#3d4b8a" strokeWidth="1.5" />
					<path d="M14 9v10M9 14h10" stroke="#3d4b8a" />
				</Icon>
				86 / 2 Kb
			</p>
		</footer>
	);
}

export default function App() {
	return (
		<div className="relative flex min-h-screen flex-col overflow-hidden bg-black pt-[17px] pb-[18px] font-['Open_Sans','Noto_Sans',sans-serif] text-[#111]">
			<TitleBar />
			<MenuBar />
			<section className="border-b border-[#888] bg-[#eee]">
				<MainToolbar />
				<DrawingToolbar />
				<PeriodToolbar />
			</section>
			<Chart />
			<ChartTabs />
			<StatusBar />
			<svg width="14" height="20" viewBox="0 0 14 20" className="absolute top-[109px] left-[162px]" aria-hidden>
				<path d="M1 1v15l4-3 3 6 3-1-3-6h5z" fill="#fff" stroke="#333" />
			</svg>
		</div>
	);
}
